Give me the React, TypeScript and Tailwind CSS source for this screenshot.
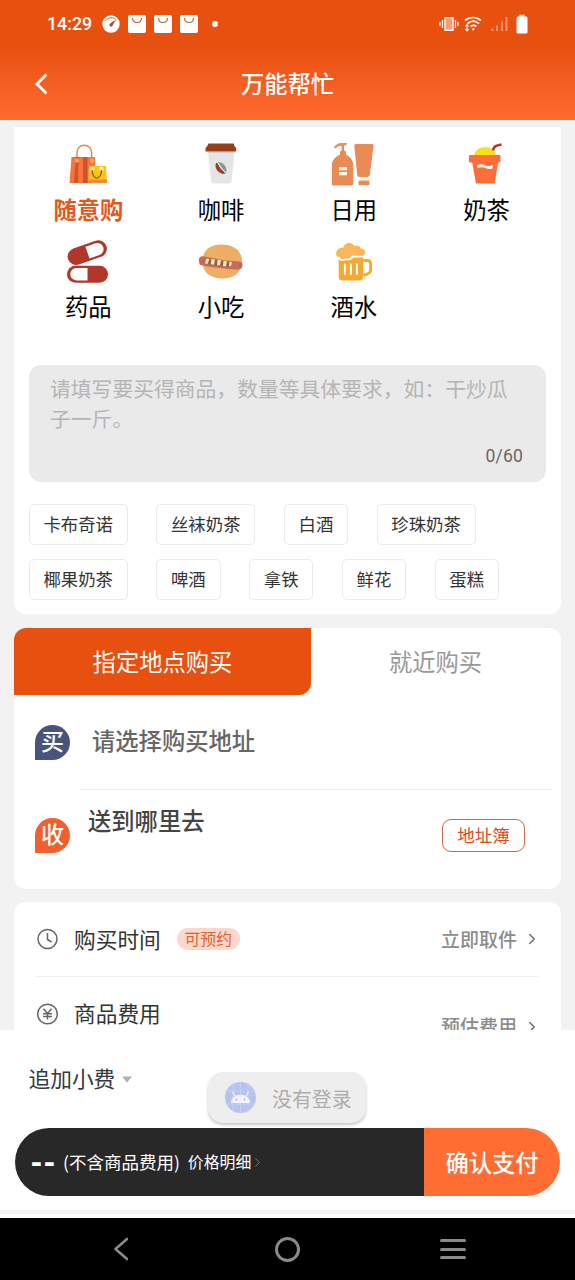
import type { ReactNode } from "react";
import { ChevronRight } from "lucide-react";
import { clsx } from "clsx";

function BagIcon() {
  return (
    <svg viewBox="0 0 44 44" className="h-11 w-11">
      <path d="M11 17V9.500a7.300 7.300 0 0 1 14.600 0V17" fill="none" stroke="#dc8b4c" strokeWidth="1.500" />
      <path d="M5.500 14h23.500l1.500 26H3.500z" fill="#f9733f" />
      <path d="M9.800 14h3l-1 26H8zM17 14h4.500v26H17z" fill="#d2522b" />
      <circle cx="11" cy="17.500" r="2.200" fill="#f3a25b" />
      <circle cx="26" cy="17.500" r="2.200" fill="#f3a25b" />
      <path d="M23 23h17l1 17H22z" fill="#f8c614" />
      <path d="M22.200 36.500h18.700l.2 3.500H22z" fill="#f4873b" />
      <circle cx="26.200" cy="26" r="2.200" fill="#fff3b0" />
      <circle cx="35.500" cy="26" r="2.200" fill="#fff3b0" />
      <path d="M26.200 27c0 10.500 9.300 10.500 9.300 0" fill="none" stroke="#b8562a" strokeWidth="1.500" />
    </svg>
  );
}

function CoffeeIcon() {
  return (
    <svg viewBox="0 0 44 44" className="h-11 w-11">
      <path d="M9 9h26.500l-3 29.500q-.3 2-2.300 2H14.500q-2 0-2.300-2z" fill="#e5e5e7" />
      <path d="M8.500 8.500h27v1.500h-27z" fill="#d0d0d2" />
      <path d="M9.500.5h25.200l1 3 1.500 1.500v3.500H6.500V5L8 3.500z" fill="#95401a" />
      <ellipse cx="22" cy="25" rx="4.500" ry="6.700" transform="rotate(-40 22 25)" fill="#8c949b" />
      <path d="M17.300 19.500c-1.300 3-.5 7 2.500 9 2.400 1.600 4.700 2.500 6.500 2.200-.2-2.500-2.500-3-4.500-5s-2.300-5-4.500-6.200z" fill="#9b3f20" />
      <path d="M17.600 19.300c3 .3 2.700 4 5 6.300 1.700 1.800 3 2.500 4 4.800" fill="none" stroke="#f2f2f2" strokeWidth="1.100" />
    </svg>
  );
}

function DailyIcon() {
  return (
    <svg viewBox="2.500 0.500 44 44" className="h-11 w-11" fill="#ea8a54">
      <path d="M10.500 12V9.500q0-1.500 1.700-1.500V3.500Q8.500 2.800 6 6L4.500 5Q7 .5 12 .5h5.500l-1 2.500h-2v5q2 0 2 1.500V12q6.800 3.500 7.300 10.500V41q0 2-2 2H4q-2 0-2-2V22.500Q3 15.500 10.500 12z" />
      <path d="M26.500 1.500h16q1.800 0 1.600 1.500l-3.800 29.500q-.3 2-2.300 2h-8q-2 0-2.300-2L24.800 3q-.2-1.500 1.700-1.500z" />
      <rect x="29" y="38" width="11" height="4.800" rx="1.300" />
      <path d="M9.500 24.500h8v3.200h-8zM9.500 29.500h8v3.200h-8z" fill="#fff6ee" />
    </svg>
  );
}

function MilkTeaIcon() {
  return (
    <svg viewBox="1.500 0 44 44" className="h-11 w-11">
      <path d="M10.500 13.500C11 7.500 15.500 4 21.500 4S32 7.500 32.500 13.500z" fill="#f7e21a" />
      <path d="M29.500 7.500c.5-4 2.500-5 8.500-6" fill="none" stroke="#bd3022" strokeWidth="2.600" />
      <path d="M6.500 12H36q1 0 1 1v5.500q0 1-1 1h-1.500L31.300 40.500H12.500L8.700 19.500H6.500q-1 0-1-1V13q0-1 1-1z" fill="#fb6d39" />
      <path d="M13.500 22.500c3-2 6-1 8.500 0s4.500.7 7.500-.5l-.5 3.500c-3 1-5 .5-7.500-.5s-4.500-1-7.500.3z" fill="#fff3ee" />
    </svg>
  );
}

function PillIcon() {
  return (
    <svg viewBox="0 -.700 44 44" className="h-11 w-11">
      <g transform="rotate(-19 21 12)">
        <rect x="1" y="3.500" width="40.500" height="17" rx="8.500" fill="#b0372a" />
        <path d="M21.500 5.800H32a6.200 6.200 0 0 1 0 12.400H21.500z" fill="#fff" />
      </g>
      <rect x="1" y="25" width="41" height="17" rx="8.500" fill="#b0372a" />
      <path d="M21.500 27.300h-11a6.200 6.200 0 0 0 0 12.400h11z" fill="#fff" />
    </svg>
  );
}

function SnackIcon() {
  return (
    <svg viewBox="0.500 -.500 46 44" className="h-11 w-[46px]">
      <path d="M5 21C5 10 12 4 24 4s20.500 6 20.500 17c0 10.500-7.500 17-19.500 17S5 32 5 21z" fill="#efae66" />
      <path d="M1.500 18q1-2.700 4.500-2.300c9 1.800 22 5 34 5q5.500 0 5 4-.5 5-6 4.300C27 28.500 17 27 5 25Q.5 24.500 1.500 18z" fill="#c96a58" />
      <path d="M7.500 17.800l26 3.600-.3 5L7.500 23.500z" fill="#8f6548" />
      <path d="M8.500 18l3.500.5-2 5-2.500-.6zM14 18.500l3.500.5-1 5.300-3.300-.5zM20 19.300l3.500.5-1 5h-2.800zM26 20.200l3.500.5-1 5-3-.3zM32 21.200l2.500.2-1 4.300h-2z" fill="#f8e6bd" />
    </svg>
  );
}

function BeerIcon() {
  return (
    <svg viewBox="0.800 0 44 44" className="h-11 w-11" fill="#f6a82f">
      <path d="M5.500 16.500c-2-6 2.500-9.500 6.500-8.500C12.500 2 21.500 1.200 23 6c3-1.500 6 0 6.500 2.500C34.500 8 35.500 15 31.500 16H20c-1 3-4 4.300-6 2.500-2 1.500-5.500 1-5.500-1.500z" fill="#f9b65a" />
      <path d="M7.500 18.500c2 3 5 3 7.500 1.500 3 1 5.500 0 7-2.500h10v19q0 4-4 4H11.500q-4 0-4-4z" />
      <path d="M5.500 16.500c2.500 4.500 6 4 8.500 2.500 4 1.200 6-.5 7.500-2.500h11" fill="none" stroke="#fff" strokeWidth="1.300" />
      <path d="M32 20.500h4q3.500 0 3.500 4v5q0 5-7.500 5.500" fill="none" stroke="#f6a82f" strokeWidth="2.800" />
      <path d="M13.700 24.500v9.500M19.700 24.500v9.500M25.700 24.500v9.500" stroke="#fff" strokeWidth="2" strokeLinecap="round" />
    </svg>
  );
}

const CATEGORIES: { label: string; icon: ReactNode; active?: boolean }[] = [
  { label: "随意购", icon: <BagIcon />, active: true },
  { label: "咖啡", icon: <CoffeeIcon /> },
  { label: "日用", icon: <DailyIcon /> },
  { label: "奶茶", icon: <MilkTeaIcon /> },
  { label: "药品", icon: <PillIcon /> },
  { label: "小吃", icon: <SnackIcon /> },
  { label: "酒水", icon: <BeerIcon /> },
];

const TAG_ROWS = [
  ["卡布奇诺", "丝袜奶茶", "白酒", "珍珠奶茶"],
  ["椰果奶茶", "啤酒", "拿铁", "鲜花", "蛋糕"],
];

function ShoppingNotice() {
  return (
    <svg viewBox="0 0 18 18" className="h-[18px] w-[18px]">
      <rect width="18" height="18" rx="2" fill="#fff" />
      <path d="M4.500 3c0 6 9 6 9 0" fill="none" stroke="#c06438" strokeWidth="1.200" />
    </svg>
  );
}

function StatusBar() {
  return (
    <div className="flex h-[47px] items-center justify-between pl-[47px] pr-[47px] text-white">
      <div className="flex items-center">
        <span className="w-[55px] font-[Roboto] text-[17.800px] font-medium leading-none">14:29</span>
        <svg viewBox="0 0 18 18" className="mr-[8px] h-[18px] w-[18px]">
          <circle cx="9" cy="9" r="8.700" fill="#fff" />
          <path d="M3.500 6C6 2 11.500 2 14 4.500" fill="none" stroke="#b96a48" strokeWidth="1" />
          <path d="M14 4.500L10.300 11a1.700 1.700 0 0 1-2.700-2z" fill="#a04a2a" />
        </svg>
        <div className="flex gap-[8px]">
          <ShoppingNotice />
          <ShoppingNotice />
          <ShoppingNotice />
        </div>
        <span className="ml-[14px] h-1.5 w-1.5 rounded-full bg-white" />
      </div>
      <div className="flex items-center">
        <svg viewBox="0 0 20 16" className="mr-[5px] h-4 w-5" fill="none" stroke="#fff" strokeWidth="1.300">
          <rect x="6" y="1.800" width="8" height="12.500" fill="#f79c72" />
          <path d="M3.500 4v8M1 6v4M16.500 4v8M19 6v4" />
        </svg>
        <svg viewBox="0 0 18 16" className="mr-[8px] h-4 w-[18px]" fill="none" stroke="#fff" strokeWidth="1.700">
          <path d="M1 4.500c4.500-4 11.500-4 16 0M3.500 7.700c3.500-3 8-3 11.500 0M6.500 10.500c2-1.500 4-1.500 6 0" />
          <path d="M7.500 12.500h3.500L9.200 15z" fill="#fff" stroke="none" />
          <path d="M3 8.500v6M1.300 10.500L3 8.500l1.700 2M1.300 13L3 15l1.700-2" strokeWidth="1.100" />
        </svg>
        <svg viewBox="0 0 18 16" className="mr-[8px] h-4 w-[18px]" fill="#f59068">
          <path d="M1 12.500h2.500V15H1zM6 9.500h2V15H6zM11 5.500h2V15h-2zM15.500 1h2v14h-2z" />
        </svg>
        <svg viewBox="0 0 12 20" className="h-5 w-3" fill="#fff">
          <path d="M3.500.8h5v1.700H10q1.500 0 1.500 1.500v14q0 1.500-1.500 1.500H2Q.5 19.500.5 18V4Q.5 2.500 2 2.500h1.500z" />
        </svg>
      </div>
    </div>
  );
}

function Header() {
  return (
    <header className="h-[120px] shrink-0 bg-linear-to-b from-[#e8500f] from-40% to-[#ff6c30]">
      <StatusBar />
      <div className="grid h-[73px] grid-cols-[1fr_auto_1fr] items-center text-white">
        <svg viewBox="0 0 12 22" className="ml-[35px] h-[22px] w-3" fill="none" stroke="#fff" strokeWidth="2.800">
          <path d="M11.500 1.500L2 11l9.500 9.500" />
        </svg>
        <h1 className="text-[23.300px] font-medium leading-none">万能帮忙</h1>
      </div>
    </header>
  );
}

// Round marker with a squared bottom-left corner
function Marker({ text, className }: { text: string; className: string }) {
  return (
    <span
      className={clsx(
        "flex h-[35px] w-[35px] shrink-0 items-center justify-center rounded-full rounded-bl-[4px] pb-[4px] text-[23px] font-medium leading-none text-white",
        className,
      )}
    >
      {text}
    </span>
  );
}

function ProductCard() {
  return (
    <section className="h-[487px] shrink-0 rounded-b-[12px] bg-white">
      <div className="grid grid-cols-4 px-[8px] pt-[16px]">
        {CATEGORIES.map(({ label, icon, active }) => (
          <div key={label} className="flex h-[97px] flex-col items-center">
            {icon}
            <span
              className={clsx(
                "mt-[5px] text-[23.300px] leading-[34px]",
                active ? "font-bold text-[#e4581f]" : "text-black",
              )}
            >
              {label}
            </span>
          </div>
        ))}
      </div>

      <div className="mx-[15px] mt-[28px] flex h-[117px] flex-col justify-between rounded-[12px] bg-[#eaeaea] pb-[16px] pl-[21px] pr-[23px] pt-[8px]">
        <p className="whitespace-nowrap text-[20.800px] leading-[30px] text-[#b5b5b5]">
          请填写要买得商品，数量等具体要求，如：干炒瓜
          <br />
          子一斤。
        </p>
        <span className="text-right font-[Roboto] text-[17.500px] leading-[20px] tracking-[0.200px] text-[#666]">0/60</span>
      </div>

      <div className="mt-[22px] flex flex-col gap-[14px] pl-[14.600px]">
        {TAG_ROWS.map((row) => (
          <div key={row[0]} className="flex gap-[28.400px]">
            {row.map((tag) => (
              <span
                key={tag}
                className="flex h-[41px] items-center rounded-[5px] border border-[#ebebeb] px-[13.800px] pb-[2px] text-[17.400px] leading-none text-[#333]"
              >
                {tag}
              </span>
            ))}
          </div>
        ))}
      </div>
    </section>
  );
}

function AddressCard() {
  return (
    <section className="h-[261px] shrink-0 overflow-hidden rounded-[12px] bg-white">
      <div className="flex h-[67px] text-[23.300px]">
        <div className="flex w-[297px] items-center justify-center rounded-br-[12px] bg-[#e8500f] text-white">
          指定地点购买
        </div>
        <div className="flex w-[249px] items-center justify-center text-[#999]">就近购买</div>
      </div>
      <div className="flex h-[94px] items-center pl-[21px]">
        <Marker text="买" className="bg-[#49547c]" />
        <span className="ml-[22px] pb-[3px] text-[23.300px] font-medium text-[#666]">请选择购买地址</span>
      </div>
      <div className="ml-[66px] mr-[8px] h-px bg-[#ececec]" />
      <div className="flex h-[99px] pl-[21px] pr-[36px]">
        <Marker text="收" className="mt-[28px] bg-[#f0602f]" />
        <span className="ml-[18px] mt-[13px] flex-1 text-[23.300px] font-medium leading-[34px] text-[#444]">
          送到哪里去
        </span>
        <button className="mt-[29px] h-[33px] w-[83px] rounded-[9px] border border-[#d2654c] pb-[1px] text-[17.500px] leading-none text-[#d94a1e]">
          地址簿
        </button>
      </div>
    </section>
  );
}

function OrderCard() {
  return (
    <section className="mt-[-1px] shrink-0 rounded-t-[12px] bg-white px-[22px]">
      <div className="flex h-[74px] items-center">
        <svg viewBox="0 0 22 22" className="h-[22px] w-[22px]" fill="none" stroke="#666" strokeWidth="1.500">
          <circle cx="11.500" cy="11" r="9.500" />
          <path d="M11.500 5v6.500l4 2.500" />
        </svg>
        <span className="ml-[16px] text-[21.700px] text-[#333]">购买时间</span>
        <span className="ml-[16px] flex h-[22px] w-[63px] items-center justify-center rounded-full bg-[#fcd7cb] text-[15.800px] leading-none text-[#df612c]">
          可预约
        </span>
        <span className="ml-auto text-[19px] font-medium text-[#8c8c8c]">立即取件</span>
        <ChevronRight className="ml-[6px] mr-[-2px] h-[18px] w-[18px] text-[#666]" strokeWidth={1.8} />
      </div>
      <div className="h-px bg-[#f2f2f2]" />
      <div className="flex items-start">
        <svg viewBox="0 0 22 22" className="mt-[26px] h-[22px] w-[22px]" fill="none" stroke="#666" strokeWidth="1.500">
          <circle cx="11.500" cy="11" r="9.800" />
          <path d="M7.500 5.800l4 4.700 4-4.700M7 10.700h9M7 13.500h9M11.500 10.500v6" />
        </svg>
        <span className="ml-[16px] mt-[20px] text-[21.700px] leading-[32px] text-[#333]">商品费用</span>
        <span className="ml-auto mt-[34px] text-[19px] font-medium leading-[30px] text-[#8c8c8c]">预估费用</span>
        <ChevronRight className="ml-[6px] mr-[-2px] mt-[41px] h-[18px] w-[18px] text-[#666]" strokeWidth={1.8} />
      </div>
    </section>
  );
}

function Toast() {
  return (
    <div className="absolute left-[208px] top-[42px] flex h-[51px] w-[158px] items-center rounded-[15px] bg-[#eee] pl-[17px] shadow-[0_2px_3px_rgba(0,0,0,0.22)]">
      <svg viewBox="0 0 31 31" className="h-[31px] w-[31px]">
        <circle cx="15.500" cy="15.500" r="15.500" fill="#b8c2ee" />
        <path d="M8 0v31M15.500 0v31M23 0v31M0 9h31M0 22h31" stroke="#cbd2f2" strokeWidth=".7" />
        <path d="M6 21c0-11 19-11 19 0z" fill="#f3f4fa" />
        <path d="M10 14L7.500 9.800M21 14l2.500-4.200" stroke="#f3f4fa" strokeWidth="1.200" />
        <circle cx="11.500" cy="17.500" r=".9" fill="#a8b3e6" />
        <circle cx="19.500" cy="17.500" r=".9" fill="#a8b3e6" />
      </svg>
      <span className="ml-[16px] pt-[2px] text-[19.900px] text-[#adadad]">没有登录</span>
    </div>
  );
}

function PayBar() {
  return (
    <footer className="relative h-[188px] shrink-0 bg-white">
      <div className="flex h-[98px] items-center gap-[7px] pl-[28.500px] text-[21.700px] text-[#333a40]">
        <span className="pb-[1px]">追加小费</span>
        <svg viewBox="0 0 10 7" className="h-[7px] w-[10px]">
          <path d="M0 .5h10L5 6.500z" fill="#b0b0b0" />
        </svg>
      </div>
      <div className="mx-[15px] flex h-[68px] text-white">
        <div className="flex w-[409px] items-center rounded-l-full bg-[#282828] pl-[15px]">
          <span className="w-[33px] whitespace-nowrap pt-[2px] font-[Roboto] text-[29px] font-black leading-none">
            --
          </span>
          <span className="text-[17.500px]">(不含商品费用)</span>
          <span className="ml-[8px] text-[15.900px]">价格明细</span>
          <ChevronRight className="ml-[-1px] h-[15px] w-[15px] text-[#777]" strokeWidth={1.6} />
        </div>
        <button className="flex-1 rounded-r-full bg-[#ff6d33] text-[23.300px] font-medium">确认支付</button>
      </div>
      <div className="mt-[14px] h-[4px] bg-[#f3f3f3]" />
      <Toast />
    </footer>
  );
}

function SystemNav() {
  return (
    <nav className="flex h-[62px] shrink-0 items-center justify-between bg-black pl-[112px] pr-[109px]">
      <svg
        viewBox="0 0 16 24"
        className="h-6 w-4"
        fill="none"
        stroke="#8a8a8a"
        strokeWidth="2.600"
        strokeLinecap="round"
        strokeLinejoin="round"
      >
        <path d="M15 2L3.500 12 15 22" />
      </svg>
      <span className="ml-[7px] h-[25px] w-[25px] rounded-full border-[3px] border-[#8a8a8a]" />
      <div className="flex w-[26px] flex-col gap-[5.500px]">
        <span className="h-[3px] rounded-full bg-[#8a8a8a]" />
        <span className="h-[3px] rounded-full bg-[#8a8a8a]" />
        <span className="h-[3px] rounded-full bg-[#8a8a8a]" />
      </div>
    </nav>
  );
}

export default function App() {
  return (
    <div className="flex h-[1280px] w-[575px] flex-col overflow-hidden bg-white font-['Noto_Sans_CJK_SC',sans-serif]">
      <Header />
      <main className="flex h-[910px] shrink-0 flex-col gap-[14px] overflow-hidden bg-[#f2f2f2] px-[14px] pt-[7px]">
        <ProductCard />
        <AddressCard />
        <OrderCard />
      </main>
      <PayBar />
      <SystemNav />
    </div>
  );
}
